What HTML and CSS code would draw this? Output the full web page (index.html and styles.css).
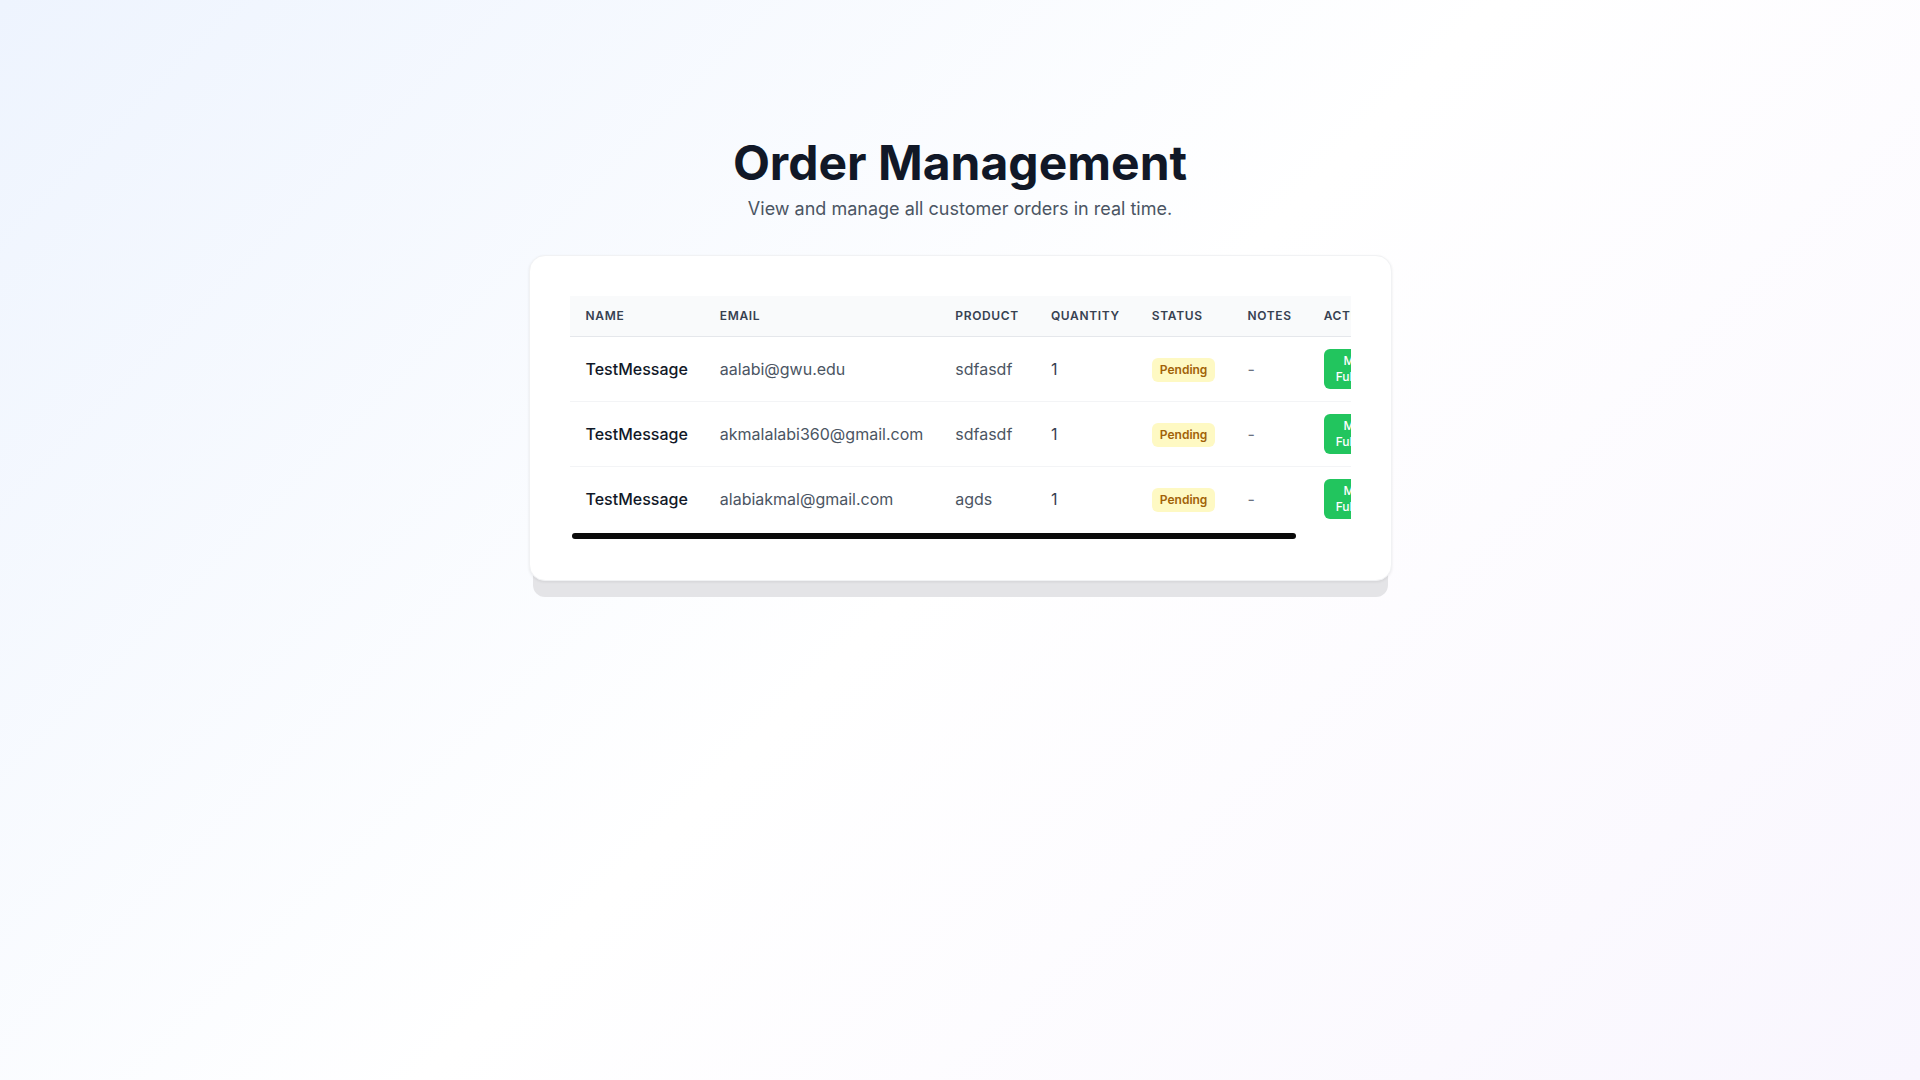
FILE: index.html
```html
<!DOCTYPE html>
<html lang="en">
<head>
<meta charset="utf-8">
<title>Order Management</title>
<link rel="stylesheet" href="styles.css">
</head>
<body>
<main class="page">
  <header class="page-head">
    <h1 class="title">Order Management</h1>
    <p class="subtitle">View and manage all customer orders in real time.</p>
  </header>
  <section class="card">
    <div class="table-scroll">
      <table class="orders">
        <thead>
          <tr>
            <th>Name</th>
            <th>Email</th>
            <th>Product</th>
            <th>Quantity</th>
            <th>Status</th>
            <th>Notes</th>
            <th>Actions</th>
          </tr>
        </thead>
        <tbody>
          <tr>
            <td class="c-name">TestMessage</td>
            <td class="c-muted">aalabi@gwu.edu</td>
            <td class="c-muted">sdfasdf</td>
            <td class="c-qty">1</td>
            <td><span class="badge">Pending</span></td>
            <td class="c-note">-</td>
            <td class="c-action"><button class="btn">Mark Fulfilled</button></td>
          </tr>
          <tr>
            <td class="c-name">TestMessage</td>
            <td class="c-muted">akmalalabi360@gmail.com</td>
            <td class="c-muted">sdfasdf</td>
            <td class="c-qty">1</td>
            <td><span class="badge">Pending</span></td>
            <td class="c-note">-</td>
            <td class="c-action"><button class="btn">Mark Fulfilled</button></td>
          </tr>
          <tr>
            <td class="c-name">TestMessage</td>
            <td class="c-muted">alabiakmal@gmail.com</td>
            <td class="c-muted">agds</td>
            <td class="c-qty">1</td>
            <td><span class="badge">Pending</span></td>
            <td class="c-note">-</td>
            <td class="c-action"><button class="btn">Mark Fulfilled</button></td>
          </tr>
        </tbody>
      </table>
    </div>
    <div class="scrollbar" aria-hidden="true">
      <div class="scrollbar-thumb"></div>
    </div>
  </section>
</main>
</body>
</html>
```
FILE: styles.css
```css
* { box-sizing: border-box; }

html, body { margin: 0; padding: 0; }

body {
  min-height: 100vh;
  font-family: Inter, "Liberation Sans", Arial, sans-serif;
  color: #111827;
  background: linear-gradient(135deg, #eef4fe 0%, #ffffff 50%, #f9f6fe 100%);
}

.page {
  display: flex;
  flex-direction: column;
  align-items: center;
  padding-top: 139px;
}

.page-head {
  text-align: center;
  margin-bottom: 32px;
}

.title {
  margin: 0;
  font-size: 48px;
  line-height: 48px;
  font-weight: 700;
  color: #111827;
}

.subtitle {
  margin: 8px 0 0;
  font-size: 18px;
  line-height: 28px;
  color: #4b5563;
}

.card {
  width: 863px;
  padding: 40px;
  background: #ffffff;
  border: 1px solid #f1f2f4;
  border-radius: 16px;
  box-shadow: 0 1px 3px rgba(0, 0, 0, 0.08), 0 20px 0 -4px #e4e4e7;
}

.table-scroll {
  overflow: hidden;
}

.scrollbar {
  height: 8px;
  padding: 1px 0 1px 2px;
}

.scrollbar-thumb {
  width: 724px;
  height: 6px;
  border-radius: 3px;
  background: #0a0a0a;
}

.orders {
  border-collapse: collapse;
  white-space: nowrap;
}

.orders th {
  padding: 12px 16px;
  background: #f9fafb;
  border-bottom: 1px solid #e5e7eb;
  text-align: left;
  font-size: 12px;
  line-height: 16px;
  font-weight: 600;
  letter-spacing: 0.055em;
  text-transform: uppercase;
  color: #374151;
}

.orders td {
  padding: 12px 16px;
  font-size: 16px;
  line-height: 24px;
  color: #4b5563;
  border-bottom: 1px solid #f3f4f6;
  vertical-align: middle;
}

.orders tbody tr:last-child td {
  border-bottom-color: transparent;
}

.orders td.c-name {
  font-weight: 500;
  color: #111827;
}

.orders td.c-qty {
  color: #374151;
}

.orders td.c-note {
  color: #6b7280;
}

.badge {
  display: inline-block;
  padding: 4px 8px;
  font-size: 12px;
  line-height: 16px;
  font-weight: 600;
  color: #a16207;
  background: #fef9c3;
  border-radius: 6px;
}

.c-action {
  white-space: normal;
}

.btn {
  display: block;
  width: min-content;
  padding: 4px 12px;
  border: none;
  border-radius: 6px;
  background: #22c55e;
  color: #ffffff;
  font-family: inherit;
  font-size: 12px;
  line-height: 16px;
  font-weight: 500;
  text-align: center;
}
```
